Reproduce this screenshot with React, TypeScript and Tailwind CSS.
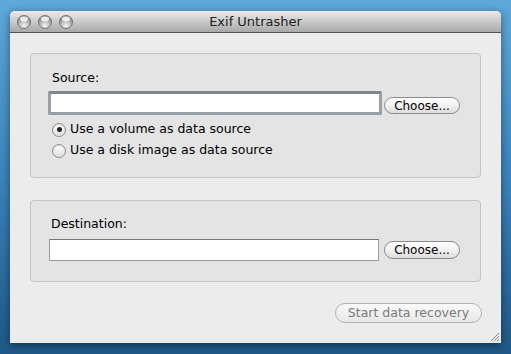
import React from 'react';

const font = { fontFamily: '"DejaVu Sans", "Liberation Sans", sans-serif' };

function Light() {
  return (
    <svg width="14" height="14" viewBox="0 0 14 14">
      <defs>
        <radialGradient id="lg" cx="50%" cy="78%" r="62%">
          <stop offset="0%" stopColor="#f7f7f7" />
          <stop offset="100%" stopColor="#8f8f8f" />
        </radialGradient>
      </defs>
      <circle cx="7" cy="7" r="6.5" fill="url(#lg)" stroke="#767676" strokeWidth="1" />
      <ellipse cx="7" cy="4" rx="4" ry="2.4" fill="#ffffff" opacity="0.8" />
    </svg>
  );
}

function Radio({ checked, label }: { checked?: boolean; label: string }) {
  return (
    <div className="flex items-center gap-[4px] h-[21px]">
      <div className="w-[14px] h-[14px] rounded-full border border-[#8e8e8e] bg-gradient-to-b from-[#ffffff] to-[#dedede] flex items-center justify-center shadow-[inset_0_1px_1px_rgba(0,0,0,0.15)]">
        {checked && <div className="w-[5px] h-[5px] rounded-full bg-[#222]" />}
      </div>
      <span className="text-[12.5px] text-black">{label}</span>
    </div>
  );
}

function ChooseButton({ h }: { h: string }) {
  return (
    <button className={`block w-[76px] ${h} rounded-full border border-[#8a8a8a] bg-gradient-to-b from-[#ffffff] via-[#f2f2f2] to-[#dcdcdc] text-[12px] text-black leading-none`}>
      Choose...
    </button>
  );
}

export default function App() {
  return (
    <div
      className="w-[511px] h-[354px] overflow-hidden bg-gradient-to-b from-[#5fa8da] via-[#3c84bd] to-[#1f5888] pt-[11px] pl-[10px]"
      style={font}
    >
      <div className="relative w-[491px] h-[332px] bg-[#ececec] rounded-t-[5px] shadow-[0_2px_8px_rgba(0,0,0,0.45)] flex flex-col">
        {/* title bar */}
        <div className="relative h-[22px] rounded-t-[5px] bg-gradient-to-b from-[#ebebeb] to-[#a9a9a9] border-b border-[#515151] flex items-center justify-center shrink-0">
          <div className="absolute left-[7px] top-[4px] flex gap-[7px]">
            <Light />
            <Light />
            <Light />
          </div>
          <span className="text-[13px] text-[#222]">Exif Untrasher</span>
        </div>

        <div className="px-[20px] pt-[20px] flex flex-col">
          {/* source */}
          <div className="h-[125px] rounded-[4px] border border-[#c4c4c4] bg-[#e4e4e4] pl-[17px] pt-[15px]">
            <div className="text-[12.5px] text-black pl-[4px] h-[18px]">Source:</div>
            <div className="flex items-start gap-[2px] mt-[4px]">
              <div className="w-[334px] h-[24px] bg-white border-[3px] border-[#9a9fa5] border-t-[#7f858c] rounded-[2px]" />
              <div className="mt-[6px] flex">
                <ChooseButton h="h-[17px]" />
              </div>
            </div>
            <div className="mt-[4px] pl-[4px] flex flex-col">
              <Radio checked label="Use a volume as data source" />
              <Radio label="Use a disk image as data source" />
            </div>
          </div>

          {/* destination */}
          <div className="mt-[22px] h-[82px] rounded-[4px] border border-[#c4c4c4] bg-[#e4e4e4] pl-[18px] pt-[14px]">
            <div className="text-[12.5px] text-black pl-[2px] h-[18px]">Destination:</div>
            <div className="flex items-center gap-[5px] mt-[6px]">
              <div className="w-[330px] h-[22px] bg-white border border-[#9b9b9b] border-t-[#777]" />
              <ChooseButton h="h-[18px]" />
            </div>
          </div>

          <div className="flex justify-end mt-[21px]">
            <button className="w-[147px] h-[20px] mr-[-1px] rounded-full border border-[#b4b4b4] bg-gradient-to-b from-[#fafafa] to-[#e6e6e6] text-[12.5px] text-[#7a7a7a] leading-none">
              Start data recovery
            </button>
          </div>
        </div>

        {/* resize grip */}
        <svg className="absolute right-[1px] bottom-[1px]" width="11" height="11" viewBox="0 0 11 11">
          <path d="M10 2 L2 10 M10 5 L5 10 M10 8 L8 10" stroke="#8a8a8a" strokeWidth="1" />
        </svg>
      </div>
    </div>
  );
}
